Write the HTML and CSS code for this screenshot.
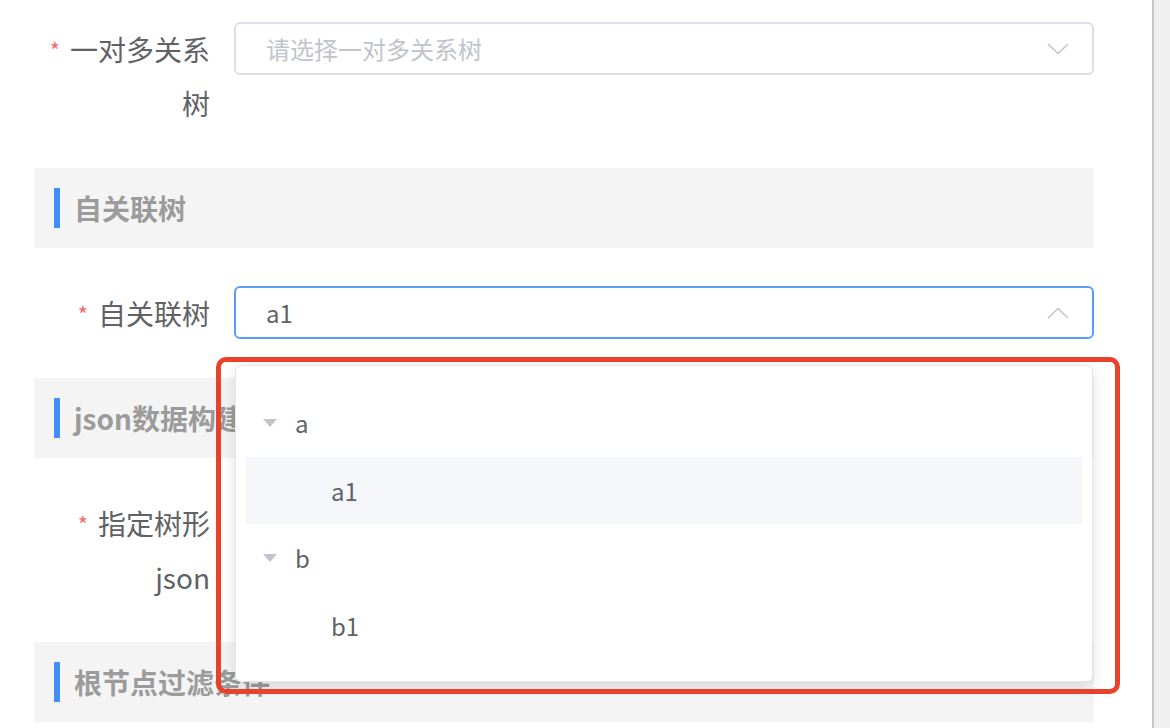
FILE: index.html
```html
<!DOCTYPE html>
<html lang="zh">
<head>
<meta charset="utf-8">
<title>表单</title>
<link rel="stylesheet" href="styles.css">
</head>
<body>
<div class="screen">
  <main class="form">
    <div class="field">
      <div class="label"><span class="req">*</span>一对多关系<br>树</div>
      <div class="control">
        <div class="select">
          <span class="placeholder">请选择一对多关系树</span>
          <svg class="chev" width="22" height="12" viewBox="0 0 22 12"><path d="M1 1 L11 10.5 L21 1" fill="none" stroke="#c0c4cc" stroke-width="1.6"/></svg>
        </div>
      </div>
    </div>

    <div class="section"><span class="bar"></span><span class="title">自关联树</span></div>

    <div class="field">
      <div class="label"><span class="req">*</span>自关联树</div>
      <div class="control">
        <div class="select focus">
          <span class="value">a1</span>
          <svg class="chev" width="22" height="12" viewBox="0 0 22 12"><path d="M1 11 L11 1.5 L21 11" fill="none" stroke="#c0c4cc" stroke-width="1.6"/></svg>
        </div>
        <div class="dropdown">
          <div class="node"><span class="caret"></span><span class="text">a</span></div>
          <div class="node child hover"><span class="text">a1</span></div>
          <div class="node"><span class="caret"></span><span class="text">b</span></div>
          <div class="node child"><span class="text">b1</span></div>
        </div>
        <div class="annot"></div>
      </div>
    </div>

    <div class="section"><span class="bar"></span><span class="title">json数据构建</span></div>

    <div class="field">
      <div class="label"><span class="req">*</span>指定树形<br>json</div>
      <div class="control"></div>
    </div>

    <div class="section"><span class="bar"></span><span class="title">根节点过滤条件</span></div>
  </main>
  <div class="edge"></div>
</div>
</body>
</html>
```

FILE: styles.css
```css
html, body {
  margin: 0;
  padding: 0;
  background: #fff;
}
body {
  font-family: "Noto Sans CJK SC", "Noto Sans", sans-serif;
  color: #606266;
  overflow: hidden;
}
.screen {
  display: flex;
  width: 1170px;
  height: 728px;
  overflow: hidden;
}
.form {
  width: 1060px;
  padding: 22px 0 0 34px;
  flex: 0 0 auto;
}
.edge {
  margin-left: 58px;
  width: 16px;
  border-left: 2px solid #c6c6c6;
  background: #f0f0f0;
}
.field {
  display: flex;
  align-items: flex-start;
  margin-bottom: 38px;
}
.field.last {
  margin-bottom: 37px;
}
.label {
  width: 200px;
  height: auto;
  box-sizing: border-box;
  padding-right: 24px;
  text-align: right;
  font-size: 28px;
  line-height: 54px;
  color: #606266;
  flex: 0 0 auto;
}
.req {
  color: #f56c6c;
  font-size: 22px;
  line-height: 0;
  margin-right: 10px;
  vertical-align: 2px;
}
.control {
  position: relative;
  flex: 1;
}
.select {
  height: 53px;
  box-sizing: border-box;
  border: 2px solid #dcdfe6;
  border-radius: 6px;
  display: flex;
  align-items: center;
  padding: 0 23px 0 30px;
  font-size: 24px;
  line-height: 1;
}
.select.focus {
  border-color: #5a9df8;
}
.placeholder {
  color: #c0c4cc;
  flex: 1;
}
.value {
  color: #606266;
  flex: 1;
}
.chev {
  flex: 0 0 auto;
}
.section {
  height: 80px;
  box-sizing: border-box;
  background: #f4f4f4;
  display: flex;
  align-items: center;
  padding-left: 20px;
  margin-bottom: 38px;
}
.bar {
  width: 6px;
  height: 40px;
  background: #448ef7;
  margin-right: 14px;
}
.title {
  font-size: 28px;
  line-height: 1;
  font-weight: bold;
  color: #9b9b9b;
}
.dropdown {
  position: absolute;
  left: 1px;
  top: 79px;
  width: 858px;
  height: 317px;
  box-sizing: border-box;
  background: #fff;
  border: 1px solid #e4e7ed;
  border-radius: 6px;
  box-shadow: 0 4px 16px rgba(0, 0, 0, 0.12);
  padding: 23px 10px 0;
  z-index: 2;
}
.node {
  height: 67.5px;
  display: flex;
  align-items: center;
  padding-left: 17px;
  font-size: 24px;
  color: #606266;
}
.node.child {
  padding-left: 85px;
}
.node.hover {
  background: #f5f7fa;
}
.caret {
  width: 0;
  height: 0;
  border-left: 7px solid transparent;
  border-right: 7px solid transparent;
  border-top: 8px solid #c0c4cc;
  margin-right: 18px;
}
.annot {
  position: absolute;
  left: -18px;
  top: 71px;
  width: 904px;
  height: 337px;
  box-sizing: border-box;
  border: 5px solid #e8422b;
  border-radius: 10px;
  z-index: 3;
}
```
